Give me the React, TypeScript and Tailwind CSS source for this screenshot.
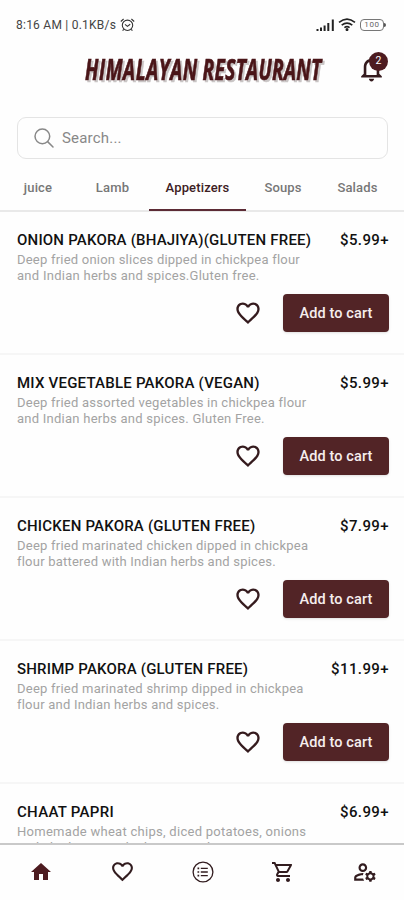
import { MdFavoriteBorder, MdHome, MdOutlineManageAccounts, MdOutlineShoppingCart, MdNotificationsNone } from "react-icons/md";
import { IoSearchOutline } from "react-icons/io5";

type Dish = { name: string; price: string; lines: string[]; nameClass: string; lineClasses: string[] };

const dishes: Dish[] = [
  {
    name: "ONION PAKORA (BHAJIYA)(GLUTEN FREE)",
    price: "$5.99+",
    lines: ["Deep fried onion slices dipped in chickpea flour", "and Indian herbs and spices.Gluten free."],
    nameClass: "tracking-[0.2px]",
    lineClasses: ["tracking-[0.22px]", "tracking-[0.27px]"],
  },
  {
    name: "MIX VEGETABLE PAKORA (VEGAN)",
    price: "$5.99+",
    lines: ["Deep fried assorted vegetables in chickpea flour", "and Indian herbs and spices. Gluten Free."],
    nameClass: "tracking-[0.22px]",
    lineClasses: ["tracking-[0.24px]", "tracking-[0.25px]"],
  },
  {
    name: "CHICKEN PAKORA (GLUTEN FREE)",
    price: "$7.99+",
    lines: ["Deep fried marinated chicken dipped in chickpea", "flour battered with Indian herbs and spices."],
    nameClass: "tracking-[0.2px]",
    lineClasses: ["tracking-[0.24px]", "tracking-[0.22px]"],
  },
  {
    name: "SHRIMP PAKORA (GLUTEN FREE)",
    price: "$11.99+",
    lines: ["Deep fried marinated shrimp dipped in chickpea", "flour and Indian herbs and spices."],
    nameClass: "tracking-[0.2px]",
    lineClasses: ["tracking-[0.24px]", "tracking-[0.22px]"],
  },
  {
    name: "CHAAT PAPRI",
    price: "$6.99+",
    lines: ["Homemade wheat chips, diced potatoes, onions", "and chickpeas with chutney and yogurt."],
    nameClass: "tracking-[0.3px]",
    lineClasses: ["tracking-[0.28px]", "tracking-[0.3px]"],
  },
];

function StatusBar() {
  return (
    <div className="flex h-[49px] shrink-0 items-center justify-between pl-4 pr-[18px] text-[#444]">
      <div className="flex items-center gap-[4px]">
        <span className="whitespace-nowrap text-[12px] tracking-[0.24px]">8:16 AM | 0.1KB/s</span>
        <svg width="15" height="14" viewBox="0 0 15 14" fill="none" stroke="#333" strokeWidth="1.1">
          <circle cx="7.5" cy="7.3" r="5.2" />
          <path d="M.8 3.5 3.6 1M14.2 3.5 11.4 1M5 6.4l2.4 2 2.8-2.2M3.8 11.3l-1.2 1.4M11.2 11.3l1.2 1.4" />
        </svg>
      </div>
      <div className="flex items-center">
        <svg width="19" height="12" viewBox="0 0 19 12" fill="#222">
          <path d="M.5 10h2v2h-2zM4 8.5h2V12H4zM7.6 6.5h2V12h-2zM11.3 4h2v8h-2zM15.8.5h2V12h-2z" />
        </svg>
        <svg className="ml-[3px]" width="18" height="13" viewBox="0 0 18 13" fill="none" stroke="#222" strokeWidth="1.6">
          <path d="M1 4.4q8-6.6 16 0M3.7 7.2q5.3-4.3 10.6 0M6.4 9.6q2.6-1.9 5.2 0" />
          <circle cx="9" cy="11.6" r=".7" fill="#222" />
        </svg>
        <div className="ml-1 flex items-center">
          <span className="flex h-[12px] w-[24px] items-center justify-center rounded-[4px] border border-[#777] text-[8px] leading-none tracking-[0.6px] text-[#666]">100</span>
          <span className="h-[4px] w-[2px] rounded-r bg-[#555]" />
        </div>
      </div>
    </div>
  );
}

function Logo() {
  return (
    <svg
      className="-my-2 overflow-visible font-['Open_Sans',sans-serif] font-bold italic [filter:drop-shadow(2px_2px_0_#c9c5c5)]"
      width="244"
      height="48"
      viewBox="0 0 244 48"
      fill="#4a1518"
      stroke="#4a1518"
      strokeWidth=".7"
    >
      <g transform="translate(3 35.5) scale(.66 1)">
        <text x="0" y="0" fontSize="29" textLength="170" lengthAdjust="spacing">HIMALAYAN</text>
        <text x="178" y="0" fontSize="29" textLength="180" lengthAdjust="spacing">RESTAURANT</text>
      </g>
    </svg>
  );
}

function MenuListIcon() {
  return (
    <svg width="22" height="22" viewBox="0 0 22 22" fill="none" stroke="#321c1f" strokeWidth="1.3">
      <circle cx="11" cy="11" r="9.9" />
      <path d="M8.8 7.3h7M8.8 11h7M8.8 14.7h7" />
      <path d="M5.5 7.3h1.7M5.5 11h1.7M5.5 14.7h1.7" strokeWidth="1.7" />
    </svg>
  );
}

function DishRow({ dish }: { dish: Dish }) {
  return (
    <article className="h-[143px] shrink-0 border-b-2 border-[#f6f6f6] pl-[17px] pr-[15px] pt-[18px]">
      <div className="flex h-[20px] items-center justify-between whitespace-nowrap text-[15px] font-medium text-[#111]">
        <h2 className={dish.nameClass}>{dish.name}</h2>
        <span className="tracking-[0.4px]">{dish.price}</span>
      </div>
      <div className="mt-[2px] whitespace-nowrap text-[13px] leading-[16px] text-[#a3a3a3]">
        {dish.lines.map((line, i) => (
          <p key={line} className={dish.lineClasses[i]}>{line}</p>
        ))}
      </div>
      <div className="mt-[10px] flex items-center justify-end gap-[21px]">
        <MdFavoriteBorder size={28} color="#351b1e" />
        <button className="h-[38px] w-[106px] rounded-[4px] bg-[#522426] pt-px text-[14.5px] font-medium tracking-[0.1px] text-[#f6eeee] shadow-sm">
          Add to cart
        </button>
      </div>
    </article>
  );
}

export default function App() {
  return (
    <div className="flex h-[900px] w-[404px] flex-col overflow-hidden bg-[#fefefe] font-[Roboto,sans-serif]">
      <StatusBar />
      <header className="flex h-[38px] shrink-0 items-center justify-between pl-[82px] pr-[17px]">
        <Logo />
        <div className="relative">
          <MdNotificationsNone size={31} color="#351b1e" />
          <span className="absolute left-[13px] top-[-1px] flex size-[19px] items-center justify-center rounded-full bg-[#4d1b20] text-[10.5px] text-white">2</span>
        </div>
      </header>
      <div className="ml-[17px] mr-[16px] mt-[30px] flex h-[42px] shrink-0 items-center gap-[6px] rounded-[9px] border border-[#e4e4e4] pl-[14px] text-[#888]">
        <IoSearchOutline size={24} />
        <span className="pt-px text-[15px] tracking-[0.2px]">Search...</span>
      </div>
      <nav className="flex h-[53px] shrink-0 border-b-2 border-[#e9e9e9] text-[13px] font-medium tracking-[0.15px] text-[#777]">
        <span className="flex w-[76px] items-center justify-center pt-[6px]">juice</span>
        <span className="flex w-[73px] items-center justify-center pt-[6px]">Lamb</span>
        <span className="-mb-px flex w-[97px] items-center justify-center border-b-2 border-[#5c2b35] pt-[8px] text-[#3d2024]">Appetizers</span>
        <span className="flex w-[74px] items-center justify-center pt-[6px]">Soups</span>
        <span className="flex w-[75px] items-center justify-center pt-[6px]">Salads</span>
      </nav>
      <main className="flex min-h-0 flex-1 flex-col overflow-hidden">
        {dishes.map((dish) => <DishRow key={dish.name} dish={dish} />)}
      </main>
      <footer className="flex h-[57px] shrink-0 items-center justify-between border-t-2 border-[#c9c9c9] pb-[2px] pl-[29px] pr-[26px] text-[#321c1f]">
        <MdHome size={24} color="#4d1b20" />
        <MdFavoriteBorder size={25} />
        <MenuListIcon />
        <MdOutlineShoppingCart size={24} />
        <MdOutlineManageAccounts size={26} />
      </footer>
    </div>
  );
}
